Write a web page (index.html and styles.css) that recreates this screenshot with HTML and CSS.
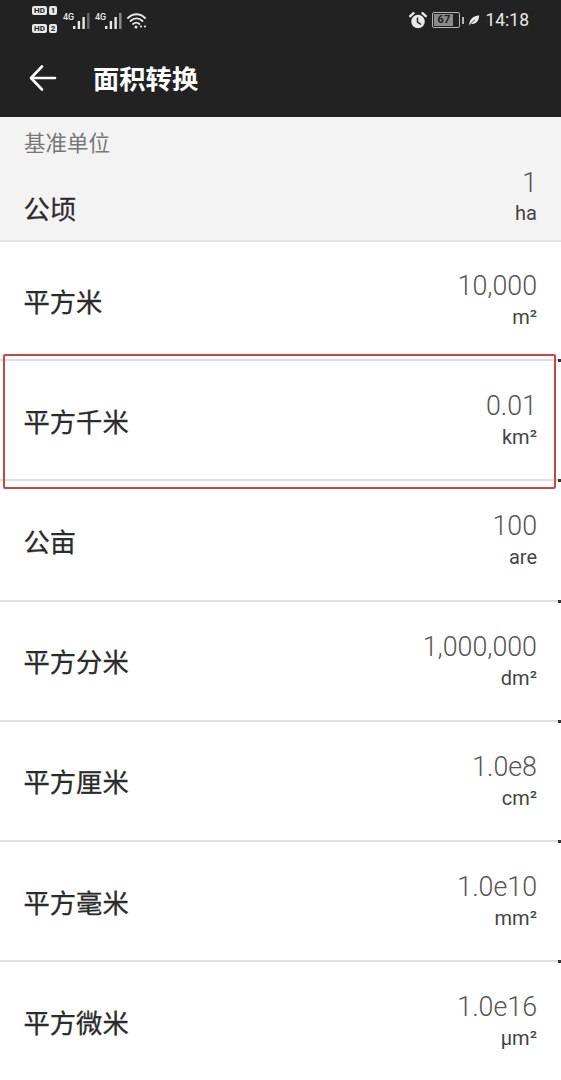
FILE: index.html
```html
<!DOCTYPE html>
<html lang="en">
<head>
    <meta charset="UTF-8">
    <meta name="viewport" content="width=device-width, initial-scale=1.0">
    <title>面积转换</title>
    <link rel="stylesheet" href="styles.css">
</head>
<body>
    <header class="app-header">
        <div class="status-bar">
            <div class="status-left">
                <div class="sim-stack">
                    <div class="sim-line"><span class="sim-tag">HD</span><span class="sim-num">1</span></div>
                    <div class="sim-line"><span class="sim-tag">HD</span><span class="sim-num">2</span></div>
                </div>
                <div class="signal">
                    <span class="signal-label">4G</span>
                    <svg class="signal-bars" width="17" height="16" viewBox="0 0 17 16">
                        <rect x="0" y="13" width="2.4" height="3" fill="#e8e8e8"/>
                        <rect x="4.7" y="8" width="2.4" height="8" fill="#e8e8e8"/>
                        <rect x="9.4" y="4" width="2.4" height="12" fill="#e8e8e8"/>
                        <rect x="14.1" y="0" width="2.4" height="16" fill="#6a6a6a"/>
                    </svg>
                </div>
                <div class="signal">
                    <span class="signal-label">4G</span>
                    <svg class="signal-bars" width="17" height="16" viewBox="0 0 17 16">
                        <rect x="0" y="13" width="2.4" height="3" fill="#e8e8e8"/>
                        <rect x="4.7" y="8" width="2.4" height="8" fill="#e8e8e8"/>
                        <rect x="9.4" y="4" width="2.4" height="12" fill="#e8e8e8"/>
                        <rect x="14.1" y="0" width="2.4" height="16" fill="#8a8a8a"/>
                    </svg>
                </div>
                <svg class="wifi" width="20" height="16" viewBox="0 0 20 16" fill="none" stroke="#e8e8e8" stroke-width="1.8" stroke-linecap="round">
                    <path d="M1 5 C6 0 13 0 18 5"/>
                    <path d="M3.5 8 C7 4.5 12 4.5 15.5 8"/>
                    <path d="M6 11 C8 9.3 10.5 9.3 12.5 11"/>
                    <circle cx="9" cy="14" r="1.5" fill="#e8e8e8" stroke="none"/>
                    <circle cx="14" cy="13.5" r="1.1" fill="#e8e8e8" stroke="none"/>
                    <circle cx="18" cy="13.5" r="1.1" fill="#e8e8e8" stroke="none"/>
                </svg>
            </div>
            <div class="status-right">
                <svg class="alarm" width="18" height="17" viewBox="0 0 18 17">
                    <circle cx="9" cy="9.5" r="6.8" fill="#e8e8e8"/>
                    <path d="M1.2 4.2 L4.5 1.2 M16.8 4.2 L13.5 1.2" stroke="#e8e8e8" stroke-width="2.4" stroke-linecap="round"/>
                    <path d="M8.5 5.5 V10 L12 12.5" fill="none" stroke="#222" stroke-width="1.5"/>
                </svg>
                <div class="battery">
                    <span class="battery-body"><span class="battery-fill">67</span></span>
                    <span class="battery-cap"></span>
                </div>
                <svg class="leaf" width="12" height="13" viewBox="0 0 14 14">
                    <path d="M1 13 C2 5 6 2 13 1 C13 8 9 12 3.5 11 Z" fill="#e8e8e8"/>
                    <path d="M1 13 L8 6" stroke="#222" stroke-width="1"/>
                </svg>
                <span class="clock">14:18</span>
            </div>
        </div>
        <div class="app-bar">
            <svg class="back-icon" width="28" height="28" viewBox="0 0 28 28" fill="none" stroke="#fff" stroke-width="2.6" stroke-linecap="round" stroke-linejoin="round">
                <path d="M26 14 H2.5"/>
                <path d="M13 2.5 L2 14 L13 25.5"/>
            </svg>
            <h1 class="app-title">面积转换</h1>
        </div>
    </header>

    <section class="base-unit">
        <div class="base-label">基准单位</div>
        <div class="unit-row unit-row-base">
            <span class="unit-name">公顷</span>
            <div class="unit-value">
                <span class="value-num">1</span>
                <span class="value-unit">ha</span>
            </div>
        </div>
    </section>

    <main class="unit-list">
        <div class="unit-row">
            <span class="unit-name">平方米</span>
            <div class="unit-value">
                <span class="value-num">10,000</span>
                <span class="value-unit">m²</span>
            </div>
        </div>
        <div class="unit-row">
            <span class="unit-name">平方千米</span>
            <div class="unit-value">
                <span class="value-num">0.01</span>
                <span class="value-unit">km²</span>
            </div>
            <div class="highlight-box"></div>
        </div>
        <div class="unit-row">
            <span class="unit-name">公亩</span>
            <div class="unit-value">
                <span class="value-num">100</span>
                <span class="value-unit">are</span>
            </div>
        </div>
        <div class="unit-row">
            <span class="unit-name">平方分米</span>
            <div class="unit-value">
                <span class="value-num">1,000,000</span>
                <span class="value-unit">dm²</span>
            </div>
        </div>
        <div class="unit-row">
            <span class="unit-name">平方厘米</span>
            <div class="unit-value">
                <span class="value-num">1.0e8</span>
                <span class="value-unit">cm²</span>
            </div>
        </div>
        <div class="unit-row">
            <span class="unit-name">平方毫米</span>
            <div class="unit-value">
                <span class="value-num">1.0e10</span>
                <span class="value-unit">mm²</span>
            </div>
        </div>
        <div class="unit-row">
            <span class="unit-name">平方微米</span>
            <div class="unit-value">
                <span class="value-num">1.0e16</span>
                <span class="value-unit">µm²</span>
            </div>
        </div>
    </main>
</body>
</html>
```

FILE: styles.css
```css
:root {
    --bar-dark: #222222;
    --status-light: #e8e8e8;
    --base-grey: #f3f3f3;
    --divider: #dedede;
    --text-dark: #2b2b2b;
    --text-mid: #555555;
    --mark-red: #c8473f;
}

* {
    margin: 0;
    padding: 0;
    box-sizing: border-box;
}

html, body {
    height: 1080px;
    overflow: hidden;
}

body {
    font-family: Roboto, "Noto Sans CJK SC", sans-serif;
    background: #ffffff;
    color: var(--text-dark);
}

.app-header {
    height: 117px;
    background: var(--bar-dark);
    color: #ffffff;
}

.status-bar {
    height: 40px;
    padding: 0 32px;
    display: flex;
    justify-content: space-between;
    align-items: center;
    color: var(--status-light);
}

.status-left {
    display: flex;
    align-items: center;
}

.sim-stack {
    display: flex;
    flex-direction: column;
    gap: 9px;
    margin-top: -1px;
}

.sim-line {
    display: flex;
    gap: 2px;
}

.sim-tag, .sim-num {
    height: 9px;
    background: var(--status-light);
    color: var(--bar-dark);
    border-radius: 2px;
    font-size: 8px;
    font-weight: 700;
    line-height: 9px;
    text-align: center;
}

.sim-tag { width: 15px; }
.sim-num { width: 8px; }

.signal {
    display: flex;
    height: 16px;
    margin-left: 6px;
    margin-top: 1px;
}

.signal + .signal {
    margin-left: 5px;
}

.signal-label {
    width: 10px;
    font-size: 9px;
    line-height: 9px;
    font-weight: 500;
}

.wifi {
    margin-left: 5px;
    margin-top: 1px;
}

.status-right {
    display: flex;
    align-items: center;
}

.battery {
    display: flex;
    align-items: center;
    margin-left: 5px;
}

.battery-body {
    width: 28px;
    height: 16px;
    border: 1px solid #b5b5b5;
    border-radius: 2px;
    padding: 1px;
    display: flex;
}

.battery-fill {
    width: 19px;
    background: #8a8a8a;
    color: var(--bar-dark);
    font-size: 11px;
    font-weight: 700;
    line-height: 12px;
    text-align: center;
}

.battery-cap {
    width: 2px;
    height: 7px;
    margin-left: 2px;
    background: #b5b5b5;
}

.leaf {
    margin-left: 4px;
}

.clock {
    margin-left: 5px;
    font-size: 17.5px;
}

.app-bar {
    height: 77px;
    padding: 0 0 0 29px;
    display: flex;
    align-items: center;
}

.back-icon {
    margin-top: -1px;
}

.app-title {
    margin-left: 36px;
    margin-top: -2px;
    font-size: 26.3px;
    font-weight: 700;
    font-family: "Noto Sans CJK SC", sans-serif;
}

.base-unit {
    height: 125px;
    background: var(--base-grey);
    border-bottom: 2px solid #e6e6e6;
}

.base-label {
    height: 43px;
    padding: 8px 24px 0;
    font-size: 21.5px;
    line-height: 34px;
    color: #777777;
    font-family: "Noto Sans CJK SC", sans-serif;
}

.unit-list {
    margin-top: -1px;
}

.unit-row {
    position: relative;
    height: 120.2px;
    padding: 0 24px 0 23.5px;
    display: flex;
    justify-content: space-between;
    align-items: center;
    border-bottom: 2px solid var(--divider);
}

/* speck at the end of each divider in the photo */
.unit-row::after {
    content: "";
    position: absolute;
    right: 0;
    bottom: -3px;
    width: 3px;
    height: 3px;
    background: #333333;
}

.unit-row-base {
    height: 80px;
    border-bottom: none;
}

.unit-row-base::after {
    display: none;
}

.unit-row-base .unit-name {
    margin-top: 14px;
}

.unit-name {
    font-size: 26.3px;
    font-family: "Noto Sans CJK SC", sans-serif;
    -webkit-text-stroke: 0.3px var(--text-dark);
    color: var(--text-dark);
}

.unit-value {
    padding-top: 3px;
    display: flex;
    flex-direction: column;
    align-items: flex-end;
}

.unit-row-base .unit-value {
    padding-top: 0;
    margin-bottom: 4px;
}

.value-num {
    font-size: 26.8px;
    font-weight: 300;
    line-height: 30px;
    color: var(--text-mid);
}

.value-unit {
    margin-top: 1px;
    font-size: 20px;
    line-height: 30px;
    color: #444444;
}

.unit-row-base .value-unit {
    margin-top: 0;
}

/* red mark drawn over the screenshot */
.highlight-box {
    position: absolute;
    left: 3px;
    top: -7px;
    width: 553px;
    height: 135px;
    border: 2px solid var(--mark-red);
    border-radius: 2px;
    pointer-events: none;
}
```
